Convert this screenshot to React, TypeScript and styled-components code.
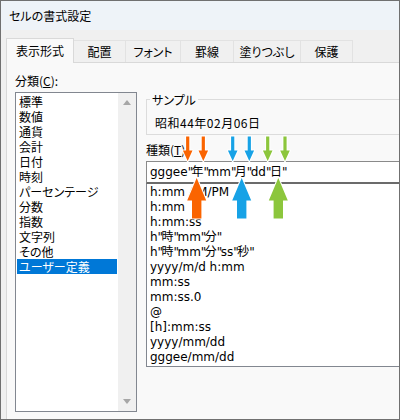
import React from 'react'
import styled, { createGlobalStyle, css } from 'styled-components'

const GlobalStyle = createGlobalStyle`
    body {
        margin: 0;
        background: #fff;
        font-family: "Noto Sans CJK JP", sans-serif;
        font-feature-settings: "palt";
    }
`

const Window = styled.div`
    position: relative;
    width: 400px;
    height: 420px;
    box-sizing: border-box;
    border: 1px solid #707070;
    background: #f0f0f0;
    display: flex;
    flex-direction: column;
    overflow: hidden;
    font-size: 12px;
    color: #000;
`

const TitleBar = styled.div`
    flex: none;
    height: 29px;
    display: flex;
    align-items: center;
    padding-left: 8px;
    background: #eef3f8;
    line-height: 1;
`

const TabStrip = styled.div`
    flex: none;
    height: 32px;
    display: flex;
    align-items: flex-end;
    padding-left: 5px;
    position: relative;
    z-index: 1;
`

const Tab = styled.div<{ $w: number; $active?: boolean }>`
    width: ${p => p.$w}px;
    height: 22px;
    box-sizing: border-box;
    display: flex;
    align-items: center;
    justify-content: center;
    border: 1px solid #e2e2e2;
    border-bottom: none;
    background: #f0f0f0;
    & + & {
        margin-left: -1px;
    }
    ${p =>
        p.$active &&
        css`
            height: 25px;
            margin-bottom: -1px;
            padding-bottom: 1px;
            border-color: #d9d9d9;
            background: #f9f9f9;
            position: relative;
        `}
`

const Panel = styled.div`
    flex: 1;
    margin-left: 5px;
    background: #f9f9f9;
    border-top: 1px solid #d9d9d9;
    border-left: 1px solid #d9d9d9;
    display: flex;
    gap: 9px;
    padding: 10px 0 0 8px;
`

const LeftColumn = styled.div`
    flex: none;
    width: 122px;
    display: flex;
    flex-direction: column;
`

const RightColumn = styled.div`
    flex: none;
    width: 270px;
    display: flex;
    flex-direction: column;
`

const FieldLabel = styled.div`
    line-height: 15px;
    margin-bottom: 4px;
`

const Mnemonic = styled.span`
    text-decoration: underline;
    text-underline-offset: 1px;
`

const CategoryBox = styled.div`
    height: 320px;
    box-sizing: border-box;
    border: 1px solid #828790;
    background: #fff;
    display: flex;
`

const CategoryItems = styled.div`
    flex: 1;
    padding: 1px;
`

const CategoryItem = styled.div<{ $selected?: boolean }>`
    height: 15px;
    line-height: 15px;
    padding-left: 2px;
    white-space: nowrap;
    ${p =>
        p.$selected &&
        css`
            background: #0078d7;
            color: #fff;
        `}
`

const ScrollTrack = styled.div`
    width: 18px;
    background: #f0f0f0;
    display: flex;
    flex-direction: column;
    justify-content: space-between;
    align-items: center;
    padding: 7px 0;
`

const ScrollArrow = styled.div<{ $down?: boolean }>`
    width: 0;
    height: 0;
    border-left: 4.5px solid transparent;
    border-right: 4.5px solid transparent;
    ${p => (p.$down ? 'border-top' : 'border-bottom')}: 5px solid #a6a6a6;
`

const GroupBox = styled.fieldset`
    margin: 19px 0 0;
    padding: 0 8px 4px;
    border: 1px solid #dcdcdc;
    min-width: 0;
`

const GroupLegend = styled.legend`
    padding: 0 2px;
    margin-left: -5px;
    line-height: 15px;
    font-size: 12px;
`

const SampleText = styled.div`
    padding-top: 8px;
    line-height: 15px;
    letter-spacing: 0.5px;
    font-feature-settings: normal;
`

const TypeLabel = styled(FieldLabel)`
    margin-top: 7px;
`

const codeFont = `"DejaVu Sans", "Noto Sans CJK JP", sans-serif`

const FormatInput = styled.div`
    height: 23px;
    box-sizing: border-box;
    border: 1px solid #8a8a8a;
    border-bottom: 2px solid #6b6b6b;
    background: #fff;
    padding-left: 3px;
    line-height: 20px;
    font-family: ${codeFont};
    font-feature-settings: normal;
    white-space: nowrap;
`

const FormatList = styled.div`
    border: 1px solid #828790;
    border-top: none;
    background: #fff;
    padding: 1px 0;
`

const FormatItem = styled.div`
    height: 15px;
    line-height: 15px;
    padding-left: 3px;
    font-family: ${codeFont};
    font-feature-settings: normal;
    white-space: nowrap;
`

// Tahoma's double quote is narrower than DejaVu's
const Quote = styled.span`
    letter-spacing: -1.6px;
`

const Code = ({ text }: { text: string }) => (
    <>
        {text.split(/(")/).map((part, i) => (part === '"' ? <Quote key={i}>"</Quote> : part))}
    </>
)

const Overlay = styled.svg`
    position: absolute;
    left: -1px;
    top: -1px;
    pointer-events: none;
`

const tabs = [
    { label: '表示形式', w: 68 },
    { label: '配置', w: 53 },
    { label: 'フォント', w: 56 },
    { label: '罫線', w: 54 },
    { label: '塗りつぶし', w: 68 },
    { label: '保護', w: 53 },
]

const categories = ['標準', '数値', '通貨', '会計', '日付', '時刻', 'パーセンテージ', '分数', '指数', '文字列', 'その他', 'ユーザー定義']

const formats = [
    'h:mm AM/PM',
    'h:mm',
    'h:mm:ss',
    'h"時"mm"分"',
    'h"時"mm"分"ss"秒"',
    'yyyy/m/d h:mm',
    'mm:ss',
    'mm:ss.0',
    '@',
    '[h]:mm:ss',
    'yyyy/mm/dd',
    'gggee/mm/dd',
]

const ORANGE = '#fa6400'
const BLUE = '#17a2e6'
const GREEN = '#8cc63c'

const pointers = [
    { color: ORANGE, small: [187.7, 203.3], big: 196.7 },
    { color: BLUE, small: [232.7, 249.3], big: 241.7 },
    { color: GREEN, small: [267.7, 285], big: 278.3 },
]

const smallArrow = (cx: number) =>
    `M${cx - 1.6} 136.5 H${cx + 1.6} V150.5 H${cx + 4.8} L${cx} 161 L${cx - 4.8} 150.5 H${cx - 1.6} Z`

const bigArrow = (cx: number) =>
    `M${cx} 178 L${cx + 9.5} 200.5 H${cx + 4.7} V218.5 H${cx - 4.7} V200.5 H${cx - 9.5} Z`

const Arrows = () => (
    <Overlay width={400} height={420} viewBox="0 0 400 420">
        {pointers.map(p => (
            <g key={p.color} fill={p.color} stroke="#fff" strokeWidth={2} strokeLinejoin="round" paintOrder="stroke">
                {p.small.map(x => (
                    <path key={x} d={smallArrow(x)} />
                ))}
                <path d={bigArrow(p.big)} />
            </g>
        ))}
    </Overlay>
)

export default function App() {
    return (
        <>
            <GlobalStyle />
            <Window>
                <TitleBar>セルの書式設定</TitleBar>
                <TabStrip>
                    {tabs.map((t, i) => (
                        <Tab key={t.label} $w={t.w} $active={i === 0}>
                            {t.label}
                        </Tab>
                    ))}
                </TabStrip>
                <Panel>
                    <LeftColumn>
                        <FieldLabel>
                            分類(<Mnemonic>C</Mnemonic>):
                        </FieldLabel>
                        <CategoryBox>
                            <CategoryItems>
                                {categories.map(c => (
                                    <CategoryItem key={c} $selected={c === 'ユーザー定義'}>
                                        {c}
                                    </CategoryItem>
                                ))}
                            </CategoryItems>
                            <ScrollTrack>
                                <ScrollArrow />
                                <ScrollArrow $down />
                            </ScrollTrack>
                        </CategoryBox>
                    </LeftColumn>
                    <RightColumn>
                        <GroupBox>
                            <GroupLegend>サンプル</GroupLegend>
                            <SampleText>昭和44年02月06日</SampleText>
                        </GroupBox>
                        <TypeLabel>
                            種類(<Mnemonic>T</Mnemonic>):
                        </TypeLabel>
                        <FormatInput>
                            <Code text={'gggee"年"mm"月"dd"日"'} />
                        </FormatInput>
                        <FormatList>
                            {formats.map(f => (
                                <FormatItem key={f}>
                                    <Code text={f} />
                                </FormatItem>
                            ))}
                        </FormatList>
                    </RightColumn>
                </Panel>
                <Arrows />
            </Window>
        </>
    )
}
